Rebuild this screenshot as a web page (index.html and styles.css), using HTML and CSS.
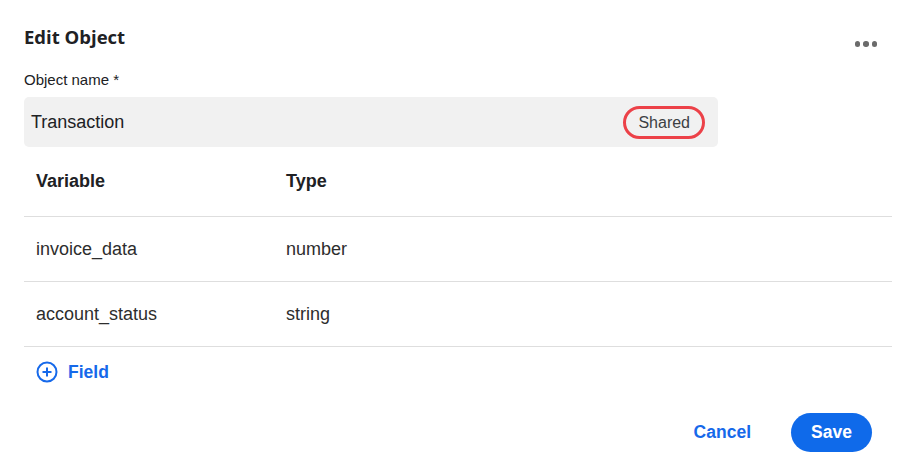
FILE: index.html
```html
<!DOCTYPE html>
<html lang="en">
<head>
<meta charset="utf-8">
<title>Edit Object</title>
<link rel="stylesheet" href="styles.css">
</head>
<body>
<div class="dialog">
  <div class="dialog-head">
    <h1 class="title">Edit Object</h1>
    <button class="more" aria-label="More options"><span></span><span></span><span></span></button>
  </div>
  <label class="field-label">Object name *</label>
  <div class="name-input">
    <span class="name-value">Transaction</span>
    <span class="badge">Shared</span>
  </div>
  <div class="vars">
    <div class="row head">
      <div class="cell var">Variable</div>
      <div class="cell">Type</div>
    </div>
    <div class="row">
      <div class="cell var">invoice_data</div>
      <div class="cell">number</div>
    </div>
    <div class="row">
      <div class="cell var">account_status</div>
      <div class="cell">string</div>
    </div>
  </div>
  <button class="add-field">
    <svg width="22" height="22" viewBox="0 0 22 22" aria-hidden="true">
      <circle cx="11" cy="11" r="9.5" fill="none" stroke="currentColor" stroke-width="2"/>
      <path d="M11 6.5v9M6.5 11h9" stroke="currentColor" stroke-width="2" fill="none"/>
    </svg>
    <span>Field</span>
  </button>
  <div class="actions">
    <button class="btn-text">Cancel</button>
    <button class="btn-primary">Save</button>
  </div>
</div>
</body>
</html>
```
FILE: styles.css
```css
* { box-sizing: border-box; }
html, body { margin: 0; background: #fff; }
body {
  font-family: "Liberation Sans", Arial, sans-serif;
  color: #202124;
}
button { font-family: inherit; background: none; border: 0; padding: 0; cursor: pointer; }

.dialog { padding: 24px 27px 0 24px; }

.dialog-head {
  display: flex;
  justify-content: space-between;
  align-items: flex-start;
}
.title {
  margin: 0;
  font-family: "Open Sans", sans-serif;
  font-size: 18.5px;
  font-weight: 700;
  line-height: 26px;
  color: #202124;
}
.more {
  display: flex;
  gap: 3px;
  margin-top: 17px;
  margin-right: 15px;
}
.more span {
  width: 5.5px;
  height: 5.5px;
  border-radius: 50%;
  background: #6b6b6b;
}

.field-label {
  display: block;
  margin-top: 22px;
  font-size: 15px;
  line-height: 16px;
  color: #202124;
}
.name-input {
  margin-top: 9px;
  width: 694px;
  height: 50px;
  background: #f1f1f1;
  border-radius: 5px;
  display: flex;
  align-items: center;
  justify-content: space-between;
  padding: 0 13px 0 7px;
}
.name-value { font-size: 18px; color: #202124; }
.badge {
  font-size: 16px;
  color: #3c4043;
  padding: 5px 12px;
  border: 3px solid #ec4148;
  border-radius: 20px;
  line-height: 17px;
}

.vars { width: 868px; }
.row {
  display: flex;
  align-items: center;
  height: 65px;
  border-bottom: 1px solid #dedede;
  font-size: 18px;
  color: #2d2d2d;
}
.row.head { height: 70px; font-weight: 700; color: #202124; }
.cell { padding-left: 12px; }
.cell.var { width: 250px; }

.add-field {
  display: flex;
  align-items: center;
  gap: 10px;
  margin-top: 14px;
  margin-left: 12px;
  color: #1669ea;
  font-size: 17.5px;
  font-weight: 700;
}

.actions {
  display: flex;
  justify-content: flex-end;
  align-items: center;
  margin-top: 30px;
  width: 848px;
}
.btn-text {
  color: #1669ea;
  font-size: 17.5px;
  font-weight: 700;
  margin-right: 40px;
}
.btn-primary {
  background: #0f6aea;
  color: #fff;
  font-size: 17.5px;
  font-weight: 700;
  width: 81px;
  height: 39px;
  border-radius: 20px;
}
```
